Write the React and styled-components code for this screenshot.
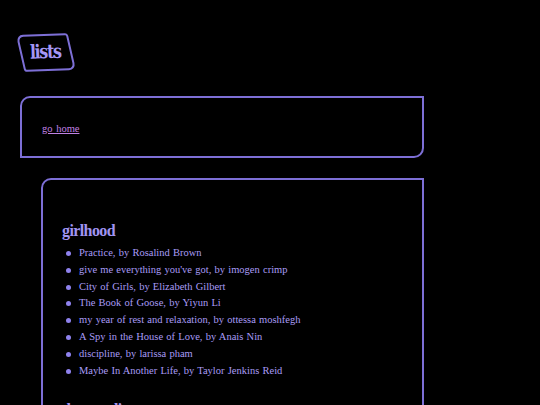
import React from "react";
import styled, { createGlobalStyle } from "styled-components";

const lavender = "#7d6fd6";

const Global = createGlobalStyle`
  html, body {
    margin: 0;
    padding: 0;
    background: #000;
  }
  body {
    font-family: "Liberation Serif", "DejaVu Serif", serif;
    color: #a99cf6;
  }
`;

const Page = styled.div`
  padding: 34px 0 0 17px;
  width: 407px;
`;

const Logo = styled.div`
  width: 48px;
  height: 33px;
  margin-left: 3px;
  border: 2px solid ${lavender};
  border-radius: 7px 3px 7px 3px;
  transform: skewX(11deg) rotate(-2deg);
  display: flex;
  align-items: center;
  justify-content: center;
`;

const LogoText = styled.span`
  transform: skewX(-11deg) scaleY(1.2);
  font-family: "DejaVu Serif", serif;
  font-weight: bold;
  font-size: 16px;
  letter-spacing: -1.3px;
  color: #a597f5;
  margin-top: -2px;
`;

const Panel = styled.section`
  margin-top: ${(p) => p.$top}px;
  margin-left: ${(p) => p.$indent}px;
  border: 2px solid ${lavender};
  border-radius: 10px 0 10px 0;
  padding: ${(p) => p.$pad};
`;

const HomeLink = styled.a`
  font-size: 10.5px;
  color: #c081e4;
  text-decoration: underline;
  word-spacing: 1px;
`;

const Title = styled.h2`
  margin: 0 0 5px;
  font-size: 16px;
  font-weight: bold;
  color: #a194f2;
  letter-spacing: -0.6px;
`;

const List = styled.ul`
  margin: 0 0 22px;
  padding-left: 15px;
  list-style: none;
`;

const Item = styled.li`
  position: relative;
  font-size: 10.5px;
  line-height: 16.8px;
  padding-left: 2px;
  word-spacing: 0.6px;
  color: #a99cf6;
  &::before {
    content: "";
    position: absolute;
    left: -11px;
    top: 6px;
    width: 5px;
    height: 5px;
    border-radius: 50%;
    background: #8f82ee;
  }
`;

const lists = [
  {
    title: "girlhood",
    books: [
      "Practice, by Rosalind Brown",
      "give me everything you've got, by imogen crimp",
      "City of Girls, by Elizabeth Gilbert",
      "The Book of Goose, by Yiyun Li",
      "my year of rest and relaxation, by ottessa moshfegh",
      "A Spy in the House of Love, by Anais Nin",
      "discipline, by larissa pham",
      "Maybe In Another Life, by Taylor Jenkins Reid",
    ],
  },
  {
    title: "dreamy lit",
    books: ["Bluets, by Maggie Nelson", "Ongoingness, by Sarah Manguso"],
  },
];

export default function App() {
  return (
    <>
      <Global />
      <Page>
        <Logo>
          <LogoText>lists</LogoText>
        </Logo>
        <Panel $top={25} $indent={3} $pad="20px 20px 20px 20px">
          <HomeLink href="#">go home</HomeLink>
        </Panel>
        <Panel $top={20} $indent={24} $pad="42px 20px 0 19px">
          {lists.map((l) => (
            <div key={l.title}>
              <Title>{l.title}</Title>
              <List>
                {l.books.map((b) => (
                  <Item key={b}>{b}</Item>
                ))}
              </List>
            </div>
          ))}
        </Panel>
      </Page>
    </>
  );
}
